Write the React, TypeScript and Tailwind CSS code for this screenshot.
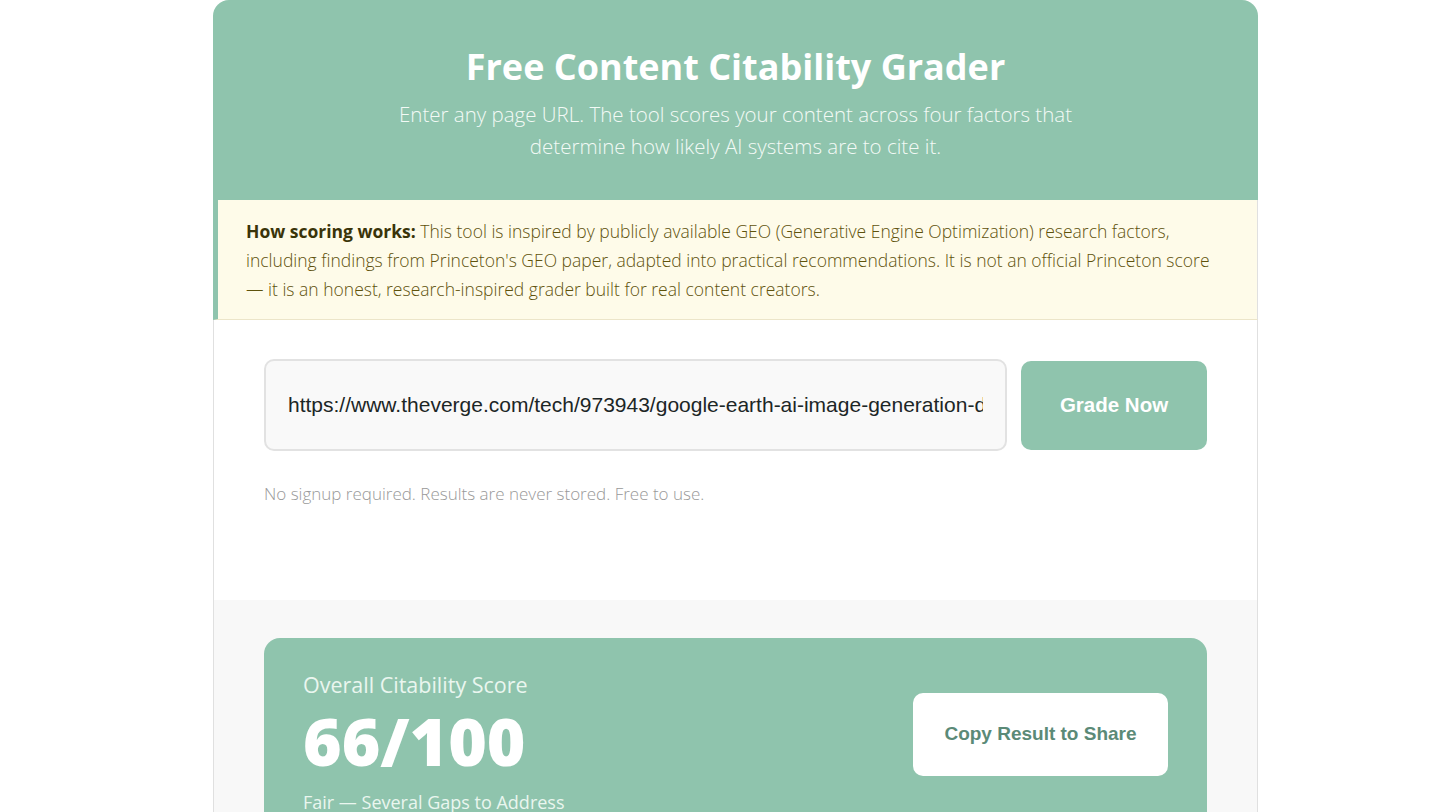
const sans = "font-['Open_Sans','Noto_Sans',sans-serif]";

const Header = () => (
  <div className="rounded-t-2xl bg-[#8fc4ad] px-10 pt-[44px] pb-[38px] text-center text-white">
    <h1 className="text-[36px] leading-[46px] font-bold">Free Content Citability Grader</h1>
    <p className="mx-auto mt-[8px] max-w-[700px] text-[20.5px] leading-[32px] font-light text-[#f3faf6]">
      Enter any page URL. The tool scores your content across four factors that determine how likely AI systems are to cite it.
    </p>
  </div>
);

const Notice = () => (
  <div className="border-r border-b border-l-[5px] border-r-[#e0e0e0] border-b-[#ece5c9] border-l-[#8fc4ad] bg-[#fefbe9] pt-[17px] pr-[35px] pb-[15px] pl-[28px] text-[17.5px] leading-[29px] font-light text-[#5e520c]">
    <strong className="font-bold text-[#3a3409]">How scoring works:</strong> This tool is inspired by publicly available GEO
    (Generative Engine Optimization) research factors, including findings from Princeton's GEO paper, adapted into practical
    recommendations. It is not an official Princeton score — it is an honest, research-inspired grader built for real content
    creators.
  </div>
);

const UrlForm = () => (
  <div className="border-x border-[#e0e0e0] px-[50px] pt-[39px] pb-[93px]">
    <div className="flex items-center gap-[14px]">
      <input
        readOnly
        value="https://www.theverge.com/tech/973943/google-earth-ai-image-generation-details"
        className="h-[92px] flex-1 rounded-[10px] border-2 border-[#e2e2e2] bg-[#f9f9f9] px-[22px] font-['Liberation_Sans',Arial,sans-serif] text-[21px] text-[#1c2626] outline-none"
      />
      <button className="h-[89px] w-[186px] rounded-[10px] bg-[#8fc4ad] font-['Liberation_Sans',Arial,sans-serif] text-[20.5px] font-bold text-white">
        Grade Now
      </button>
    </div>
    <p className="mt-[30px] text-[17px] leading-[26px] font-light text-[#999999]">
      No signup required. Results are never stored. Free to use.
    </p>
  </div>
);

const ScoreCard = () => (
  <div className="border-x border-[#e0e0e0] bg-[#f8f8f8] px-[50px] pt-[38px] pb-10">
    <div className="flex items-start justify-between rounded-2xl bg-[#8fc4ad] px-[39px] pt-[32px] pb-10">
      <div>
        <div className="text-[21.5px] leading-[30px] text-[#eaf6ef]">Overall Citability Score</div>
        <div className="text-[66px] leading-[80px] font-extrabold text-white">66/100</div>
        <div className="mt-[8px] text-[18px] leading-[28px] text-[#eaf6ef]">Fair — Several Gaps to Address</div>
      </div>
      <button className="mt-[23px] h-[83px] w-[255px] rounded-[10px] bg-white font-['Liberation_Sans',Arial,sans-serif] text-[19px] font-bold text-[#5b8a77]">
        Copy Result to Share
      </button>
    </div>
  </div>
);

export default function App() {
  return (
    <div className={`min-h-screen bg-white ${sans}`}>
      <div className="ml-[213px] w-[1045px]">
        <Header />
        <Notice />
        <UrlForm />
        <ScoreCard />
      </div>
    </div>
  );
}
